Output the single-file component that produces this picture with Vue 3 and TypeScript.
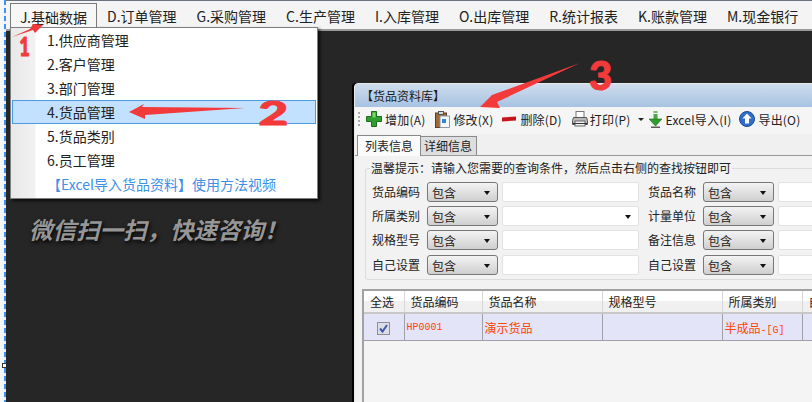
<script setup lang="ts">
const menus = ['J.基础数据', 'D.订单管理', 'G.采购管理', 'C.生产管理', 'I.入库管理', 'O.出库管理', 'R.统计报表', 'K.账款管理', 'M.现金银行']
const subItems = ['1.供应商管理', '2.客户管理', '3.部门管理', '4.货品管理', '5.货品类别', '6.员工管理']
const fields = [
  ['货品编码', '货品名称'],
  ['所属类别', '计量单位'],
  ['规格型号', '备注信息'],
  ['自己设置', '自己设置'],
]
const columns = ['全选', '货品编码', '货品名称', '规格型号', '所属类别', '自']
</script>

<template>
  <div class="page">
    <div class="ruler"><span class="handle"></span></div>
    <div class="main">
      <nav class="menubar">
        <span v-for="(m, i) in menus" :key="m" class="menu" :class="{ open: i === 0 }">{{ m }}</span>
      </nav>
      <div class="desktop">
        <p class="slogan">微信扫一扫，快速咨询！</p>

        <section class="window">
          <header class="title">【货品资料库】</header>
          <div class="toolbar">
            <span class="grip"></span>
            <span class="tool">
              <svg width="16" height="16" viewBox="0 0 16 16"><path d="M5.500 0.500h5v5h5v5h-5v5h-5v-5h-5v-5h5z" fill="#2f9e2f" stroke="#1b6e1b"/><path d="M6.500 1.500h3v5h-3z" fill="#79d96f"/></svg>
              增加(A)
            </span>
            <span class="tool t2">
              <svg width="15" height="17" viewBox="0 0 15 17"><rect x="0.500" y="2" width="11" height="14.500" fill="#9a6a3c" stroke="#5f3d1e"/><rect x="3.500" y="0.500" width="5" height="3" fill="#d8d8d8" stroke="#555"/><path d="M5 5h9.500v11.500H5z" fill="#f4f7fb" stroke="#8b95a3"/><path d="M7 8h4v4H7z" fill="#2f86d8"/></svg>
              修改(X)
            </span>
            <span class="tool t3">
              <svg width="14" height="16" viewBox="0 0 14 16"><path d="M0 6.500l14-1v4l-14 1z" fill="#c4161c"/></svg>
              删除(D)
            </span>
            <span class="tool t4">
              <svg width="16" height="16" viewBox="0 0 16 16"><rect x="4" y="0.500" width="8" height="6" fill="#fff" stroke="#777"/><path d="M1.500 6.500h13l1 3v4h-15v-4z" fill="#b9b9b9" stroke="#555"/><rect x="3" y="10" width="10" height="5" fill="#f2f2f2" stroke="#666"/><path d="M1 12.500h14" stroke="#333"/></svg>
              打印(P)
            </span>
            <span class="caret"></span>
            <span class="tool t5">
              <svg width="13" height="17" viewBox="0 0 13 17"><rect x="4.500" y="0" width="4" height="2" fill="#77b877"/><rect x="4.500" y="3" width="4" height="5" fill="#4da64d"/><path d="M0 8h13l-6.500 7z" fill="#2f9e2f" stroke="#1b6e1b" stroke-width=".6"/><rect x="2" y="15.500" width="9" height="1.500" fill="#5a5a5a"/></svg>
              Excel导入(I)
            </span>
            <span class="tool t6">
              <svg width="16" height="16" viewBox="0 0 16 16"><circle cx="8" cy="8" r="7.500" fill="#2f6fcb" stroke="#1b4a96"/><path d="M8 2.500l4.500 5H10v5H6v-5H3.500z" fill="#fff"/></svg>
              导出(O)
            </span>
          </div>
          <div class="tabs">
            <span class="tab active">列表信息</span>
            <span class="tab">详细信息</span>
          </div>
          <div class="panel">
            <fieldset class="search">
              <legend>温馨提示：请输入您需要的查询条件，然后点击右侧的查找按钮即可</legend>
              <div v-for="(row, r) in fields" :key="r" class="row">
                <div v-for="(label, c) in row" :key="c" class="field">
                  <label class="lbl">{{ label }}</label>
                  <span class="sel">包含<i></i></span>
                  <span class="input"><i v-if="r === 1 && c === 0"></i></span>
                </div>
              </div>
            </fieldset>
            <div class="grid-wrap">
              <table class="grid">
                <colgroup>
                  <col style="width: 40px" /><col style="width: 78px" /><col style="width: 120px" />
                  <col style="width: 120px" /><col style="width: 80px" /><col style="width: 40px" />
                </colgroup>
                <thead>
                  <tr><th v-for="c in columns" :key="c">{{ c }}</th></tr>
                </thead>
                <tbody>
                  <tr>
                    <td class="chk">
                      <svg width="13" height="13" viewBox="0 0 13 13"><rect x="0.500" y="0.500" width="12" height="12" fill="#dcdde6" stroke="#8d8d95"/><path d="M3 6.500l2.500 3L10 3" fill="none" stroke="#3f5aa8" stroke-width="2"/></svg>
                    </td>
                    <td class="code">HP0001</td>
                    <td>演示货品</td>
                    <td></td>
                    <td>半成品<span class="code">-[G]</span></td>
                    <td></td>
                  </tr>
                </tbody>
              </table>
            </div>
          </div>
        </section>

        <div class="dropdown">
          <div v-for="(s, i) in subItems" :key="s" class="item" :class="{ hot: i === 3 }">{{ s }}</div>
          <div class="item link">【Excel导入货品资料】使用方法视频</div>
        </div>

        <!-- 标注箭头，坐标按整页算 -->
        <svg class="arrows" width="812" height="402" viewBox="0 0 812 402">
          <path d="M12 37L30 29 33 24 43 25 35 33 33 30z" fill="#f23a3a"/>
          <path d="M129 112L144 104 142 107 245 108 145 115 145 119z" fill="#f23a3a"/>
          <path d="M580 63L492 95 480 107 500 108 497 102z" fill="#f23a3a"/>
        </svg>
        <span class="mark m1">1</span>
        <span class="mark m2">2</span>
        <span class="mark m3">3</span>
      </div>
    </div>
  </div>
</template>

<style>
html, body {
  margin: 0;
  background: #262626;
}
</style>

<style scoped>
.page {
  display: flex;
  width: 812px;
  height: 402px;
  overflow: hidden;
  font-family: "Noto Sans CJK SC", "Liberation Sans", sans-serif;
  font-size: 12px;
  color: #222;
}
.ruler {
  position: relative;
  width: 6px;
  flex: none;
  background: repeating-linear-gradient(to bottom, #3f95ec 0 5px, #e8f1fb 5px 8px) 4px 0 / 2px 100% no-repeat, #f4f7fb;
}
.handle {
  position: absolute;
  left: 2px;
  top: 363px;
  width: 3px;
  height: 3px;
  background: #fff;
  border: 1px solid #333;
}
.main {
  flex: 1;
  display: flex;
  flex-direction: column;
  min-width: 0;
}
.menubar {
  display: flex;
  flex: none;
  padding: 2px 0 0 4px;
  box-sizing: border-box;
  height: 31px;
  background: #f4f4f4;
  border-top: 1px solid #6b7480;
  border-bottom: 2px solid #9a9a9a;
}
.menu {
  padding: 0 10px;
  height: 23px;
  line-height: 27px;
  font-size: 14px;
  white-space: nowrap;
}
.menu.open {
  padding-left: 9px;
  border: 1px solid #7a7a7a;
  border-bottom: 0;
  background: #f7f7f7;
  box-sizing: border-box;
  height: 24px;
  width: 87px;
  z-index: 3;
  position: relative;
}
.desktop {
  position: relative;
  flex: 1;
  background: #262626;
}
.slogan {
  position: absolute;
  left: 23px;
  top: 183px;
  margin: 0;
  font-size: 23.500px;
  font-weight: 700;
  font-style: italic;
  line-height: 30px;
  white-space: nowrap;
  color: #969696;
  text-shadow: 1px 2px 4px #000;
}
.dropdown {
  position: absolute;
  left: 4px;
  top: -4px;
  width: 308px;
  height: 172px;
  box-sizing: border-box;
  background: linear-gradient(to right, #e8e8e8, #f2f2f2 24px, #fff 25px);
  border: 1px solid #7f7f7f;
  box-shadow: 2px 2px 3px rgba(0, 0, 0, 0.7);
  z-index: 2;
}
.item {
  height: 24px;
  line-height: 24px;
  padding-left: 36px;
  font-size: 14px;
  box-sizing: border-box;
}
.item.hot {
  margin: 0 1px;
  padding-left: 35px;
  background: #c2e0ff;
  outline: 1px solid #4a9bea;
  outline-offset: -1px;
}
.item.link {
  color: #3e8fe6;
}
.window {
  position: absolute;
  left: 348px;
  top: 52px;
  width: 480px;
  height: 340px;
  box-sizing: border-box;
  border: 1px solid #e8e8e8;
  border-radius: 4px 4px 0 0;
  background: #f0f0f0;
  box-shadow: -2px 0 0 #000;
}
.title {
  height: 23px;
  line-height: 24px;
  padding-left: 6px;
  background: linear-gradient(to bottom, #cfdcec, #a6c3e2);
  color: #1a1a1a;
}
.toolbar {
  display: flex;
  align-items: center;
  height: 24px;
  padding: 0 0 3px 3px;
  background: #f5f5f5;
  white-space: nowrap;
}
.grip {
  width: 2px;
  height: 15px;
  margin-right: 6px;
  background: repeating-linear-gradient(to bottom, #aaa 0 2px, transparent 2px 4px);
}
.tool {
  display: flex;
  align-items: center;
  gap: 3px;
  letter-spacing: 0.2px;
}
.t2 { margin-left: 10px; }
.t3 { margin-left: 9px; gap: 4px; }
.t4 { margin-left: 10px; gap: 2px; }
.t5 { margin-left: 5px; gap: 4px; }
.t6 { margin-left: 8px; gap: 3px; }
.caret {
  width: 0;
  height: 0;
  margin-left: 7px;
  border: 3px solid transparent;
  border-top: 3px solid #222;
  border-bottom: 0;
}
.tabs {
  display: flex;
  align-items: flex-end;
  height: 21px;
  padding-left: 2px;
  background: #f0f0f0;
  border-bottom: 1px solid #999;
}
.tab {
  height: 18px;
  line-height: 18px;
  padding: 0 4px 0 3px;
  margin-left: -1px;
  border: 1px solid #8a8a8a;
  border-bottom: 0;
  background: #dedede;
}
.tab.active {
  height: 20px;
  line-height: 20px;
  padding: 0 7px;
  margin-left: 0;
  margin-bottom: -1px;
  background: #fbfbfb;
  z-index: 1;
}
.panel {
  height: 250px;
  margin-left: 3px;
  padding: 5px 0 0 7px;
  background: #f2f2f2;
}
.search {
  margin: 0;
  padding: 7px 0 0 6px;
  height: 119px;
  box-sizing: border-box;
  border: 1px solid #dcdcdc;
  border-radius: 3px;
  width: 470px;
}
.search legend {
  padding: 0 1px;
  margin-left: -2px;
  line-height: 14px;
  color: #222;
}
.row {
  display: flex;
  height: 20px;
  margin-bottom: 4px;
}
.row:last-child {
  margin-top: 5px;
}
.field {
  display: flex;
  flex: none;
}
.lbl {
  width: 48px;
  margin-right: 7px;
  line-height: 20px;
}
.sel {
  position: relative;
  width: 71px;
  height: 20px;
  margin-right: 4px;
  padding-left: 4px;
  box-sizing: border-box;
  line-height: 19px;
  border: 1px solid #777;
  border-radius: 3px;
  background: linear-gradient(to bottom, #f3f3f3, #cfcfcf);
}
.sel i,
.input i {
  position: absolute;
  right: 7px;
  top: 8px;
  border: 3px solid transparent;
  border-top: 4px solid #111;
  border-bottom: 0;
}
.input {
  position: relative;
  width: 137px;
  height: 20px;
  margin-right: 9px;
  box-sizing: border-box;
  background: #fff;
  border: 1px solid #e2e2e2;
  border-radius: 2px;
}
.grid-wrap {
  width: 480px;
  height: 120px;
  margin: 9px 0 0 -3px;
  box-sizing: border-box;
  border-top: 2px solid #a2a2a2;
  border-left: 2px solid #a2a2a2;
  background: #f4f4f4;
  overflow: hidden;
}
.grid {
  table-layout: fixed;
  width: 478px;
  border-collapse: collapse;
}
.grid th {
  height: 21px;
  padding: 0 0 0 6px;
  font-weight: 400;
  text-align: left;
  white-space: nowrap;
  background: linear-gradient(to bottom, #fff 50%, #f0f0f0 50%);
  border-right: 1px solid #d8d8d8;
  border-bottom: 2px solid #c8c8c8;
}
.grid td {
  height: 23px;
  padding: 0 0 0 2px;
  white-space: nowrap;
  color: #ff4500;
  background: #e3e4f7;
  border-right: 1px solid #a0a0a8;
  border-bottom: 1px solid #a0a0a8;
}
.grid td.chk {
  padding: 3px 0 0 0;
  text-align: center;
  line-height: 1;
}
.grid .code {
  font-family: "Liberation Mono", monospace;
  font-size: 10px;
}
.arrows {
  position: absolute;
  left: -6px;
  top: -31px;
  z-index: 4;
  pointer-events: none;
}
.mark {
  position: absolute;
  z-index: 5;
  color: #f23a3a;
  font-family: Lato, "Liberation Sans", sans-serif;
  font-weight: 900;
  line-height: 1;
  -webkit-text-stroke: 1px #f23a3a;
}
.m1 { left: 11px; top: 2px; font-size: 26px; transform: scaleX(0.7); }
.m2 { left: 258px; top: 66px; font-size: 32px; transform: scaleX(1.6); }
.m3 { left: 583px; top: 24px; font-size: 40px; }
</style>
